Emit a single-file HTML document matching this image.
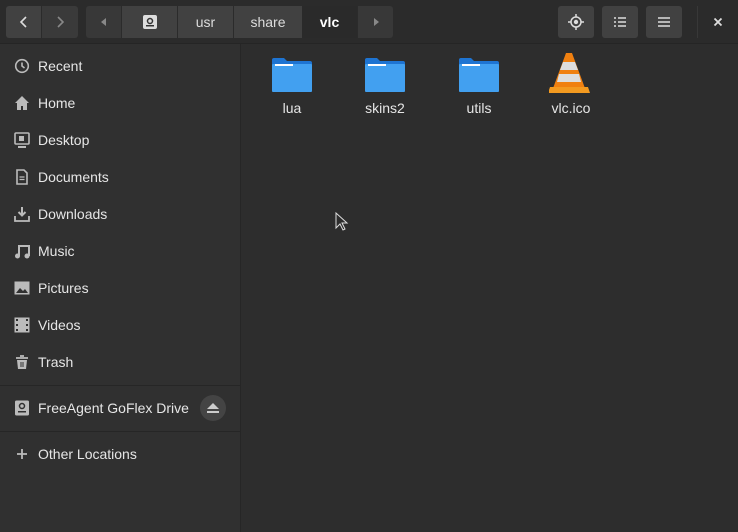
<!DOCTYPE html>
<html><head><style>
*{margin:0;padding:0;box-sizing:border-box}
body{width:738px;height:532px;background:#2d2d2d;font-family:"Liberation Sans",sans-serif;font-size:14px;color:#e8e8e8;position:relative;overflow:hidden}
.hdr{position:absolute;left:0;top:0;width:738px;height:44px;background:#2b2b2b;border-bottom:1px solid #252525}
.b{position:absolute;top:6px;height:32px;background:#414141;color:#ddd;display:flex;align-items:center;justify-content:center;font-size:14px}
.side{position:absolute;left:0;top:44px;width:241px;height:488px;background:#303030;border-right:1px solid #262626}
.it{position:absolute;left:14px;height:20px;display:flex;align-items:center;font-size:14px;color:#e6e6e6}
.ic{width:16px;height:16px;margin-right:8px;display:flex;align-items:center;justify-content:center}
.sep{position:absolute;left:0;width:241px;height:1px;background:#262626}
.f{position:absolute;top:52px;width:70px;text-align:center;font-size:14px;color:#e6e6e6}
.f svg{display:block;margin:0 auto 6px}
</style></head><body>
<div class="hdr">
<div class="b" style="left:6px;width:35px;border-radius:3px 0 0 3px"><svg width="12" height="14"><path d="M8 2L3 7l5 5" stroke="#ddd" stroke-width="1.6" fill="none"/></svg></div>
<div class="b" style="left:42px;width:36px;border-radius:0 3px 3px 0;background:#3a3a3a"><svg width="12" height="14"><path d="M4 2l5 5-5 5" stroke="#888" stroke-width="1.6" fill="none"/></svg></div>
<div class="b" style="left:86px;width:35px;background:#383838;border-radius:3px 0 0 3px"><svg width="8" height="10"><path d="M6 1L1 5l5 4z" fill="#888"/></svg></div>
<div class="b" style="left:122px;width:55px"><svg width="14" height="14"><rect x="0" y="0" width="14" height="14" rx="2" fill="#ddd"/><circle cx="7" cy="6" r="2.5" fill="none" stroke="#333" stroke-width="1.5"/><rect x="3" y="10" width="8" height="1.5" fill="#333"/></svg></div>
<div class="b" style="left:178px;width:55px">usr</div>
<div class="b" style="left:234px;width:68px">share</div>
<div class="b" style="left:302px;width:55px;background:#2a2a2a;color:#fff;font-weight:bold">vlc</div>
<div class="b" style="left:358px;width:35px;background:#383838;border-radius:0 3px 3px 0"><svg width="8" height="10"><path d="M2 1l5 4-5 4z" fill="#888"/></svg></div>
<div class="b" style="left:558px;width:36px;border-radius:3px"><svg width="16" height="16"><circle cx="8" cy="8" r="5" fill="none" stroke="#ddd" stroke-width="1.5"/><circle cx="8" cy="8" r="2.2" fill="#ddd"/><path d="M8 0v3M8 13v3M0 8h3M13 8h3" stroke="#ddd" stroke-width="1.5"/></svg></div>
<div class="b" style="left:602px;width:36px;border-radius:3px"><svg width="12" height="10"><path d="M0 1h2M4 1h8M0 5h2M4 5h8M0 9h2M4 9h8" stroke="#ddd" stroke-width="1.6"/></svg></div>
<div class="b" style="left:646px;width:36px;border-radius:3px"><svg width="12" height="10"><path d="M0 1h12M0 5h12M0 9h12" stroke="#ddd" stroke-width="1.6"/></svg></div>
<div style="position:absolute;left:697px;top:6px;width:1px;height:32px;background:#383838"></div>
<div style="position:absolute;left:711px;top:14px;width:14px;height:16px"><svg width="14" height="16"><path d="M3.5 4.5l7 7M10.5 4.5l-7 7" stroke="#ddd" stroke-width="1.8"/></svg></div>
</div>
<div class="side">
<div class="it" style="top:12px"><span class="ic"><svg width="16" height="16"><circle cx="8" cy="8" r="6.3" fill="none" stroke="#bbb" stroke-width="1.6"/><path d="M8 4.5V8l2.5 2" stroke="#bbb" stroke-width="1.6" fill="none"/></svg></span>Recent</div>
<div class="it" style="top:49px"><span class="ic"><svg width="16" height="16"><path d="M8 1L1 8h2v7h4v-4h2v4h4V8h2z" fill="#bbb"/></svg></span>Home</div>
<div class="it" style="top:86px"><span class="ic"><svg width="16" height="16"><rect x="1" y="1" width="14" height="11" rx="1" fill="none" stroke="#bbb" stroke-width="1.6"/><rect x="5" y="4" width="5" height="5" fill="#bbb"/><path d="M4 15h8" stroke="#bbb" stroke-width="2"/></svg></span>Desktop</div>
<div class="it" style="top:123px"><span class="ic"><svg width="16" height="16"><path d="M3 1h7l3 3v11H3z" fill="none" stroke="#bbb" stroke-width="1.6"/><path d="M5.5 8h5M5.5 10.5h5" stroke="#bbb" stroke-width="1.2"/></svg></span>Documents</div>
<div class="it" style="top:160px"><span class="ic"><svg width="16" height="16"><path d="M8 1v8M4.5 6L8 9.5 11.5 6" stroke="#bbb" stroke-width="2" fill="none"/><path d="M1 10v5h14v-5" stroke="#bbb" stroke-width="1.8" fill="none"/></svg></span>Downloads</div>
<div class="it" style="top:197px"><span class="ic"><svg width="16" height="16"><path d="M5 13V3h10v10" stroke="#bbb" stroke-width="2" fill="none"/><circle cx="3.5" cy="13" r="2.5" fill="#bbb"/><circle cx="13" cy="13" r="2.5" fill="#bbb"/></svg></span>Music</div>
<div class="it" style="top:234px"><span class="ic"><svg width="16" height="16"><rect x="0.5" y="1.5" width="15" height="13" fill="#bbb"/><path d="M2 13l4-5 3 3 2-2 3 4z" fill="#303030"/></svg></span>Pictures</div>
<div class="it" style="top:271px"><span class="ic"><svg width="16" height="16"><rect x="0.5" y="0.5" width="15" height="15" fill="#bbb"/><path d="M2 2h2v2H2zM2 7h2v2H2zM2 12h2v2H2zM12 2h2v2h-2zM12 7h2v2h-2zM12 12h2v2h-2z" fill="#303030"/></svg></span>Videos</div>
<div class="it" style="top:308px"><span class="ic"><svg width="16" height="16"><path d="M2 4h12M6 2h4" stroke="#bbb" stroke-width="1.8"/><path d="M3 6h10l-1 9H4z" fill="#bbb"/><path d="M7 8v5M9 8v5" stroke="#303030" stroke-width="1"/></svg></span>Trash</div>
<div class="sep" style="top:341px"></div>
<div class="it" style="top:354px"><span class="ic"><svg width="16" height="16"><rect x="1" y="0.5" width="14" height="15" rx="1.5" fill="#bbb"/><circle cx="8" cy="6" r="2.5" fill="none" stroke="#303030" stroke-width="1.5"/><rect x="4" y="11" width="8" height="1.5" fill="#303030"/></svg></span>FreeAgent GoFlex Drive</div>
<div style="position:absolute;left:200px;top:351px;width:26px;height:26px;border-radius:50%;background:#444;display:flex;align-items:center;justify-content:center"><svg width="12" height="11"><path d="M6 0l6 6H0z" fill="#ccc"/><rect y="8" width="12" height="2" fill="#ccc"/></svg></div>
<div class="sep" style="top:387px"></div>
<div class="it" style="top:400px"><span class="ic"><svg width="16" height="16"><path d="M8 3v10M3 8h10" stroke="#bbb" stroke-width="1.8"/></svg></span>Other Locations</div>
</div>
<div class="f" style="left:257px"><svg width="44" height="42"><path d="M2 8a2 2 0 012-2h10l3 3h23a2 2 0 012 2v4H2z" fill="#1e74d2"/><rect x="2" y="12" width="40" height="28" rx="1" fill="#42a0f0"/><rect x="5" y="12" width="18" height="2" fill="#fff"/></svg>lua</div>
<div class="f" style="left:350px"><svg width="44" height="42"><path d="M2 8a2 2 0 012-2h10l3 3h23a2 2 0 012 2v4H2z" fill="#1e74d2"/><rect x="2" y="12" width="40" height="28" rx="1" fill="#42a0f0"/><rect x="5" y="12" width="18" height="2" fill="#fff"/></svg>skins2</div>
<div class="f" style="left:444px"><svg width="44" height="42"><path d="M2 8a2 2 0 012-2h10l3 3h23a2 2 0 012 2v4H2z" fill="#1e74d2"/><rect x="2" y="12" width="40" height="28" rx="1" fill="#42a0f0"/><rect x="5" y="12" width="18" height="2" fill="#fff"/></svg>utils</div>
<div class="f" style="left:536px"><svg width="44" height="42"><path d="M17 1h6l14 38H3z" fill="#f08010"/><path d="M14 10h12l3 8H11z" fill="#ddd"/><path d="M10 22h20l2 8H8z" fill="#ddd"/><path d="M1 35h38l2 6H-1z" fill="#f39a20"/></svg>vlc.ico</div>
<svg style="position:absolute;left:335px;top:212px" width="14" height="20"><path d="M1 1v15l4-4 3 6 2-1-3-6h5z" fill="#2d2d2d" stroke="#ddd" stroke-width="1"/></svg>
</body></html>
